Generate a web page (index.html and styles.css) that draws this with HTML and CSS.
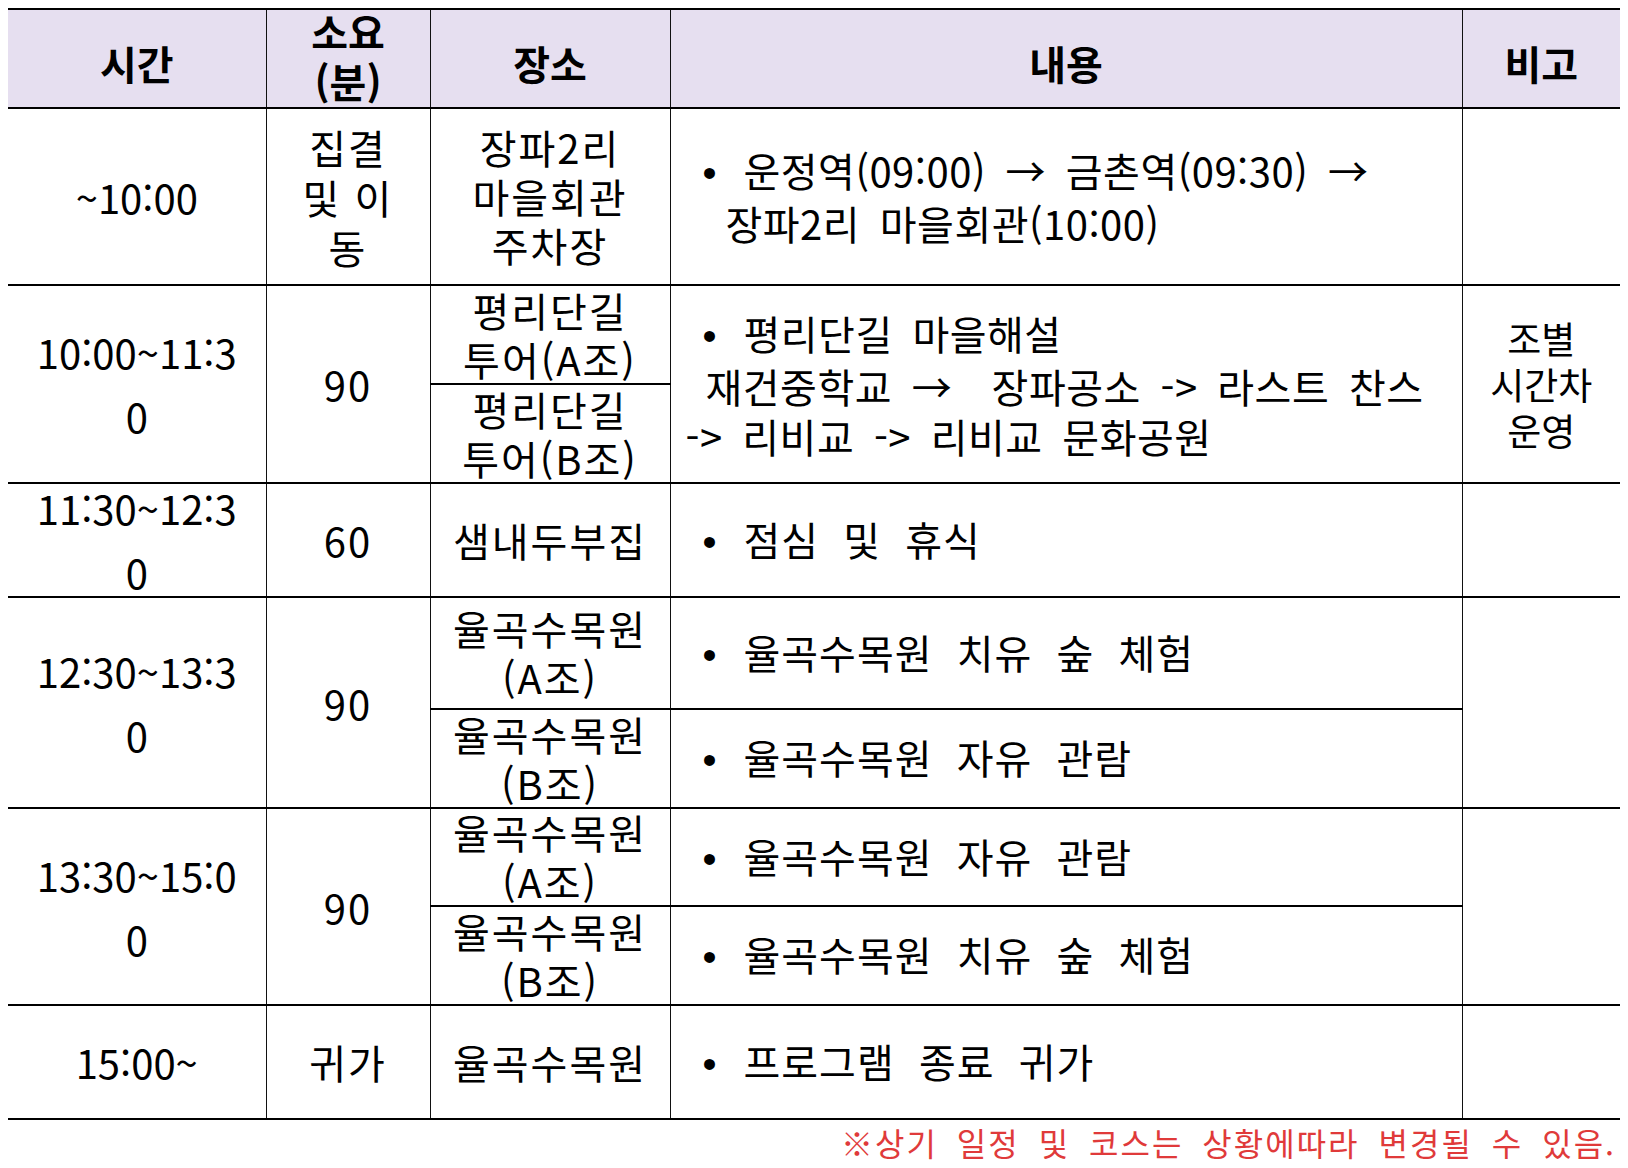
FILE: index.html
```html
<!DOCTYPE html>
<html lang="ko">
<head>
<meta charset="utf-8">
<title>일정표</title>
<link rel="stylesheet" href="styles.css">
</head>
<body>
<table class="sched">
  <colgroup>
    <col class="c-time"><col class="c-dur"><col class="c-place"><col class="c-desc"><col class="c-note">
  </colgroup>
  <thead>
    <tr class="r-head">
      <th class="edge-l">시간</th>
      <th class="two"><div class="st">소요<br>(분)</div></th>
      <th>장소</th>
      <th>내용</th>
      <th class="edge-r">비고</th>
    </tr>
  </thead>
  <tbody>
    <tr class="r177">
      <td class="time edge-l">~10:00</td>
      <td class="dur">집결<br>및 이<br>동</td>
      <td class="place">장파2리<br>마을회관<br>주차장</td>
      <td class="desc">
        <div class="ln in-dot"><span class="dot">•</span>운정역(09:00) → 금촌역(09:30) →</div>
        <div class="ln in-cont">장파2리 마을회관(10:00)</div>
      </td>
      <td class="note edge-r"></td>
    </tr>
    <tr class="r99">
      <td class="time edge-l" rowspan="2"><div class="st">10:00~11:3<br>0</div></td>
      <td class="dur" rowspan="2">90</td>
      <td class="place"><div class="st">평리단길<br>투어(A조)</div></td>
      <td class="desc" rowspan="2">
        <div class="ln in-dot"><span class="dot">•</span>평리단길 마을해설</div>
        <div class="ln in-sub">재건중학교 →&nbsp; 장파공소 -&gt; 라스트 찬스</div>
        <div class="ln">-&gt; 리비교 -&gt; 리비교 문화공원</div>
      </td>
      <td class="note edge-r" rowspan="2">조별<br>시간차<br>운영</td>
    </tr>
    <tr class="r99">
      <td class="place"><div class="st">평리단길<br>투어(B조)</div></td>
    </tr>
    <tr class="r114">
      <td class="time edge-l"><div class="st">11:30~12:3<br>0</div></td>
      <td class="dur">60</td>
      <td class="place">샘내두부집</td>
      <td class="desc"><div class="ln in-dot wide"><span class="dot">•</span>점심 및 휴식</div></td>
      <td class="note edge-r"></td>
    </tr>
    <tr class="r112">
      <td class="time edge-l" rowspan="2"><div class="st">12:30~13:3<br>0</div></td>
      <td class="dur" rowspan="2">90</td>
      <td class="place"><div class="st">율곡수목원<br>(A조)</div></td>
      <td class="desc"><div class="ln in-dot wide"><span class="dot">•</span>율곡수목원 치유 숲 체험</div></td>
      <td class="note edge-r" rowspan="2"></td>
    </tr>
    <tr class="r99">
      <td class="place"><div class="st">율곡수목원<br>(B조)</div></td>
      <td class="desc"><div class="ln in-dot wide"><span class="dot">•</span>율곡수목원 자유 관람</div></td>
    </tr>
    <tr class="r98">
      <td class="time edge-l" rowspan="2"><div class="st">13:30~15:0<br>0</div></td>
      <td class="dur" rowspan="2">90</td>
      <td class="place"><div class="st">율곡수목원<br>(A조)</div></td>
      <td class="desc"><div class="ln in-dot wide"><span class="dot">•</span>율곡수목원 자유 관람</div></td>
      <td class="note edge-r" rowspan="2"></td>
    </tr>
    <tr class="r99">
      <td class="place"><div class="st">율곡수목원<br>(B조)</div></td>
      <td class="desc"><div class="ln in-dot wide"><span class="dot">•</span>율곡수목원 치유 숲 체험</div></td>
    </tr>
    <tr class="r114">
      <td class="time edge-l">15:00~</td>
      <td class="dur">귀가</td>
      <td class="place">율곡수목원</td>
      <td class="desc"><div class="ln in-dot wide"><span class="dot">•</span>프로그램 종료 귀가</div></td>
      <td class="note edge-r"></td>
    </tr>
  </tbody>
</table>
<p class="notice">※상기 일정 및 코스는 상황에따라 변경될 수 있음.</p>
</body>
</html>
```

FILE: styles.css
```css
body {
  margin: 8px;
  background: #fff;
  color: #000;
  font-family: "Noto Sans CJK KR", "Noto Sans", sans-serif;
}

.sched {
  width: 1612px;
  border-collapse: collapse;
  table-layout: fixed;
  font-size: 40px;
}

.c-time { width: 258px; }
.c-dur { width: 164px; }
.c-place { width: 240px; }
.c-desc { width: 792px; }
.c-note { width: 158px; }

.sched th,
.sched td {
  border-left: 1px solid #111;
  border-right: 1px solid #111;
  border-top: 2px solid #000;
  border-bottom: 2px solid #000;
  padding: 0;
  text-align: center;
  vertical-align: middle;
  line-height: 50px;
  font-weight: 400;
  white-space: nowrap;
}

.sched th {
  background: #e6dff0;
  font-weight: 700;
  padding-top: 8px;
}

.sched th.two {
  padding-top: 0;
  padding-bottom: 6px;
}

.sched .edge-l { border-left: none; }
.sched .edge-r { border-right: none; }

/* keeps the line spacing while letting the text overlap the cell's inner edges */
.st { margin: -14px 0; }

.r-head { height: 99px; }
.r177 { height: 177px; }
.r99 { height: 99px; }
.r98 { height: 98px; }
.r112 { height: 112px; }
.r114 { height: 114px; }

.sched .time { line-height: 64px; }
.sched .dur { letter-spacing: 2px; }
.sched .place { line-height: 49px; letter-spacing: 2px; }
.sched .note { font-size: 37px; line-height: 46px; }

.sched .desc {
  text-align: left;
  padding-left: 15px;
  letter-spacing: 0.5px;
  word-spacing: 8px;
}

.ln { line-height: 50px; }
.in-dot { padding-left: 17px; }
.in-cont { padding-left: 40px; }
.in-sub { padding-left: 20px; }
.sched .wide { letter-spacing: 1px; word-spacing: 12px; }

.dot {
  display: inline-block;
  width: 41px;
  letter-spacing: 0;
  font-family: "Liberation Sans", sans-serif;
}

.notice {
  margin: 0;
  padding-right: 4px;
  text-align: right;
  color: #e03a3a;
  font-size: 32px;
  line-height: 44px;
  letter-spacing: 2px;
  word-spacing: 8px;
}
```
